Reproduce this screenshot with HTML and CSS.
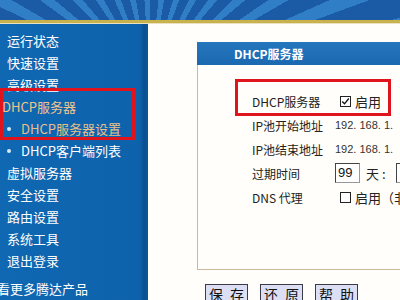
FILE: index.html
```html
<!DOCTYPE html>
<html lang="zh-CN">
<head>
  <meta charset="UTF-8" />
  <title>DHCP服务器</title>
  <link rel="stylesheet" href="styles.css">
</head>
<body>
  <div class="banner"></div>
  <div class="main">
    <nav class="sidebar">
      <a class="item">运行状态</a>
      <a class="item">快速设置</a>
      <a class="item">高级设置</a>
      <a class="item item-open">DHCP服务器</a>
      <a class="item sub sub-active">DHCP服务器设置</a>
      <a class="item sub">DHCP客户端列表</a>
      <a class="item">虚拟服务器</a>
      <a class="item">安全设置</a>
      <a class="item">路由设置</a>
      <a class="item">系统工具</a>
      <a class="item">退出登录</a>
      <a class="item more">看更多腾达产品</a>
      <div class="mark mark-nav"></div>
    </nav>
    <div class="content">
      <div class="panel">
        <div class="panel-title">DHCP服务器</div>
        <div class="panel-body">
          <div class="row">
            <span class="label">DHCP服务器</span>
            <span class="value"><span class="check"><svg viewBox="0 0 11 11" width="9" height="9"><path d="M1.5 5.5 L4.3 8.3 L9.5 1.8" fill="none" stroke="#111" stroke-width="1.6"/></svg></span>启用</span>
          </div>
          <div class="row">
            <span class="label">IP池开始地址</span>
            <span class="value ip">192. 168. 1.</span>
          </div>
          <div class="row">
            <span class="label">IP池结束地址</span>
            <span class="value ip">192. 168. 1.</span>
          </div>
          <div class="row">
            <span class="label">过期时间</span>
            <span class="value"><span class="field">99</span><span class="unit">天 :</span><span class="field"></span></span>
          </div>
          <div class="row">
            <span class="label">DNS 代理</span>
            <span class="value"><span class="check"></span>启用（非</span>
          </div>
        </div>
      </div>
      <div class="buttons">
        <button class="btn" type="button">保 存</button>
        <button class="btn" type="button">还 原</button>
        <button class="btn" type="button">帮 助</button>
      </div>
      <div class="mark mark-form"></div>
    </div>
  </div>
</body>
</html>
```

FILE: styles.css
```css
* {
  box-sizing: border-box;
}
body {
  margin: 0;
  width: 400px;
  height: 300px;
  overflow: hidden;
  background: #fffefa;
  font-family: "Noto Sans CJK SC", "DejaVu Sans", sans-serif;
  color: #333;
}
.banner {
  height: 24px;
  background:
    linear-gradient(to bottom, transparent 0 20px, #c9b24e 20px 23px, #e8e2c0 23px 24px),
    repeating-conic-gradient(from 0deg at 150px 80px, #1b5ba5 0deg 6deg, #2f7ec6 6deg 10deg);
}
.main {
  display: flex;
  height: 276px;
}
.sidebar {
  position: relative;
  width: 148px;
  flex: none;
  padding-top: 6px;
  background: linear-gradient(to right, #1068b2 0, #0d62ab 140px, #0a4f90 144px, #0b5599 148px);
  display: flex;
  flex-direction: column;
}
.item {
  display: block;
  height: 22px;
  line-height: 22px;
  padding-left: 7px;
  font-size: 13px;
  color: #fff;
  white-space: nowrap;
}
.item-open {
  padding-left: 2px;
  color: #f2c58c;
}
.sub {
  padding-left: 21px;
  position: relative;
}
.sub::before {
  content: "";
  position: absolute;
  left: 7px;
  top: 9px;
  width: 4px;
  height: 4px;
  border-radius: 50%;
  background: #d8e8f6;
}
.sub-active {
  color: #e8c08a;
}
.more {
  margin-top: 6px;
  padding-left: 0;
  margin-left: -3px;
}
.content {
  position: relative;
  flex: 1;
  padding: 18px 0 0 49px;
  overflow: hidden;
}
.panel {
  width: 260px;
}
.panel-title {
  height: 23px;
  line-height: 23px;
  background: linear-gradient(to bottom, #2676be, #1a68b0);
  color: #fff;
  font-weight: bold;
  font-size: 12px;
  padding-left: 37px;
}
.panel-body {
  height: 205px;
  border-left: 1px solid #cbb99a;
  border-bottom: 1px solid #cbb99a;
  padding: 24px 0 0 54px;
}
.row {
  display: flex;
  align-items: center;
  height: 24px;
  font-size: 12px;
}
.label {
  width: 83px;
  flex: none;
  color: #222;
  white-space: nowrap;
}
.value {
  display: flex;
  align-items: center;
  white-space: nowrap;
  color: #222;
  font-size: 13px;
}
.ip {
  font-family: "Liberation Sans", sans-serif;
  font-size: 11px;
  color: #333;
}
.check {
  width: 11px;
  height: 11px;
  margin: 0 4px 0 5px;
  border: 1px solid #222;
  background: #fff;
  display: flex;
  align-items: center;
  justify-content: center;
}
.field {
  width: 25px;
  height: 20px;
  border: 1px solid #999;
  border-top-color: #444;
  border-left-color: #444;
  background: #fff;
  font-family: "Liberation Sans", sans-serif;
  font-size: 13px;
  line-height: 18px;
  padding-left: 2px;
  color: #111;
}
.unit {
  margin: 0 10px 0 6px;
}
.buttons {
  display: flex;
  gap: 12px;
  margin: 14px 0 0 8px;
}
.btn {
  width: 43px;
  height: 20px;
  padding: 0 0 0 2px;
  border: 1px solid #3a3a48;
  background: #dcdff4;
  font-family: "Noto Sans CJK SC", sans-serif;
  font-size: 14px;
  letter-spacing: 2px;
  line-height: 18px;
  color: #111;
}
.mark {
  position: absolute;
  border: 3px solid #e0141c;
}
.mark-nav {
  left: 0;
  top: 64px;
  width: 135px;
  height: 52px;
}
.mark-form {
  left: 87px;
  top: 55px;
  width: 156px;
  height: 37px;
}
```
